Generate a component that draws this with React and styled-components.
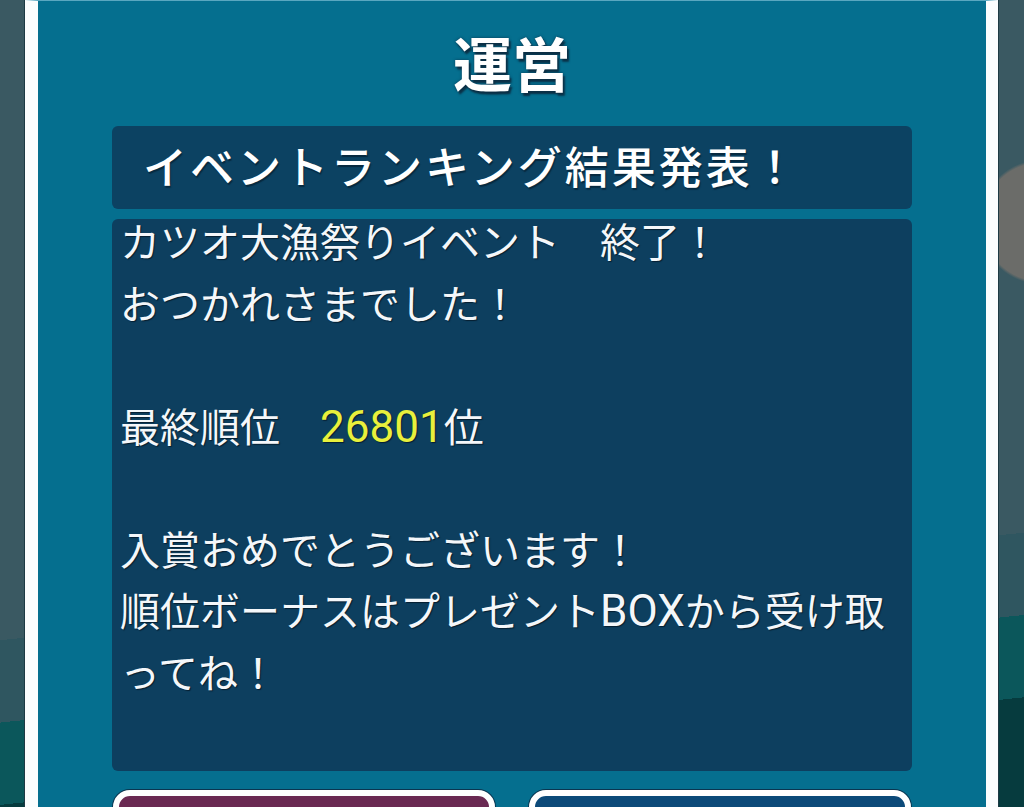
import React from "react";
import styled, { createGlobalStyle } from "styled-components";

const Global = createGlobalStyle`
  html, body { margin: 0; padding: 0; }
  body {
    width: 1024px;
    height: 807px;
    overflow: hidden;
    font-family: "Noto Sans CJK JP", "Noto Sans", sans-serif;
    background: #3a5963;
  }
  * { box-sizing: border-box; }
`;

const Stage = styled.div`
  width: 1024px;
  height: 807px;
  display: flex;
  justify-content: flex-start;
  padding-left: 25px;
  overflow: hidden;
  background:
    radial-gradient(ellipse 60px 62px at 1040px 222px, #6b6c69 0 95%, transparent 100%),
    linear-gradient(174deg, #3a5962 0 70%, #2f5660 70% 79%, #0b575b 79% 88%, #063b3e 88%);
`;

const Panel = styled.main`
  width: 973px;
  height: 807px;
  flex: none;
  background: #056f8f;
  border-left: 13px solid #fbfdfe;
  border-right: 12px solid #fbfdfe;
  box-shadow: -1px 0 0 #1d3a44, 1px 0 0 #1d3a44;
  border-top: 1px solid #5aa7c0;
  padding: 0 74px;
  display: flex;
  flex-direction: column;
  overflow: hidden;
  & > * { flex: none; }
`;

const Title = styled.h1`
  margin: 0;
  height: 125px;
  display: flex;
  align-items: center;
  justify-content: center;
  padding-bottom: 4px;
  font-size: 59px;
  font-weight: 700;
  color: #ffffff;
  letter-spacing: 0;
  text-shadow: 2px 3px 2px #0b2f45, 0 0 3px #0b3a55;
`;

const HeaderBox = styled.div`
  height: 83px;
  background: #0c4262;
  border-radius: 6px;
  display: flex;
  align-items: center;
  padding-left: 31px;
  padding-bottom: 5px;
  font-size: 44px;
  font-weight: 500;
  letter-spacing: 3px;
  color: #ffffff;
  text-shadow: 1px 2px 1px #072a40;
`;

const MessageBox = styled.div`
  margin-top: 10px;
  height: 552px;
  background: #0d3f5f;
  border-radius: 6px;
  padding: 0 8px;
  font-size: 40px;
  line-height: 61.5px;
  color: #f4f7fa;
  text-shadow: 1px 1px 1px #061e30;
  white-space: nowrap;
`;

const Line = styled.div`
  height: 61.5px;
  margin-top: ${(p) => (p.$first ? "-9px" : "0")};
`;

const Latin = styled.span`
  font-family: Roboto, "Noto Sans", sans-serif;
  font-size: 44px;
  color: ${(p) => p.$color || "inherit"};
`;

const ButtonRow = styled.div`
  margin-top: 19px;
  display: grid;
  grid-template-columns: 382px 382px;
  justify-content: space-between;
  padding: 0 1px;
`;

const ActionButton = styled.button`
  height: 90px;
  border: 6px solid #ffffff;
  border-radius: 17px;
  background: ${(p) => p.$bg};
  box-shadow: 0 0 0 1px #0a3550;
  padding: 0;
`;

export default function App() {
  return (
    <>
      <Global />
      <Stage>
        <Panel>
          <Title>運営</Title>
          <HeaderBox>イベントランキング結果発表！</HeaderBox>
          <MessageBox>
            <Line $first>カツオ大漁祭りイベント　終了！</Line>
            <Line>おつかれさまでした！</Line>
            <Line />
            <Line>
              最終順位　<Latin $color="#e8f03c">26801</Latin>位
            </Line>
            <Line />
            <Line>入賞おめでとうございます！</Line>
            <Line>
              順位ボーナスはプレゼント<Latin>BOX</Latin>から受け取
            </Line>
            <Line>ってね！</Line>
          </MessageBox>
          <ButtonRow>
            <ActionButton $bg="#6a2952" aria-label="left" />
            <ActionButton $bg="#0c4a79" aria-label="right" />
          </ButtonRow>
        </Panel>
      </Stage>
    </>
  );
}
